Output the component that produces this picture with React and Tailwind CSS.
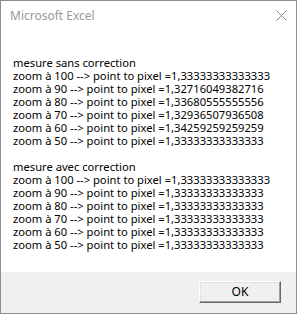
import React from "react";

const sans = { fontFamily: '"Noto Sans", "Open Sans", sans-serif' };

const without = [
  ["100", "1,33333333333333"],
  ["90", "1,32716049382716"],
  ["80", "1,33680555555556"],
  ["70", "1,32936507936508"],
  ["60", "1,34259259259259"],
  ["50", "1,33333333333333"],
];

const withFix = [
  ["100", "1,33333333333333"],
  ["90", "1,33333333333333"],
  ["80", "1,33333333333333"],
  ["70", "1,33333333333333"],
  ["60", "1,33333333333333"],
  ["50", "1,33333333333333"],
];

function Lines({ title, rows }) {
  return (
    <>
      <div>{title}</div>
      {rows.map(([z, v]) => (
        <div key={z + v}>
          zoom à {z} --&gt; point to pixel ={v}
        </div>
      ))}
    </>
  );
}

export default function App() {
  return (
    <div className="w-[298px] h-[315px] bg-white" style={sans}>
      <div className="w-[297px] h-[314px] border border-[#8e8e8e] bg-white flex flex-col">
        <div className="h-[29px] flex items-center justify-between pl-[9px] pr-[9px]">
          <span className="text-[12px] text-[#9a9a9a] mt-[1px]">Microsoft Excel</span>
          <svg width="11" height="11" viewBox="0 0 11 11">
            <path d="M0.5 0.5 L10.5 10.5 M10.5 0.5 L0.5 10.5" stroke="#8a8a8a" strokeWidth="1" />
          </svg>
        </div>
        <div className="flex-1 pt-[26px] pl-[12px] text-[11.2px] leading-[13px] text-black whitespace-nowrap">
          <Lines title="mesure sans correction" rows={without} />
          <div className="h-[13px]" />
          <Lines title="mesure avec correction" rows={withFix} />
        </div>
        <div className="h-[41px] bg-[#f0f0f0] flex justify-end items-start pt-[9px] pr-[15px]">
          <button className="w-[82px] h-[22px] bg-[#f0f0f0] border border-t-white border-l-white border-r-[#696969] border-b-[#696969] shadow-[inset_-1px_-1px_0_#a0a0a0,inset_1px_1px_0_#e3e3e3] text-[12px] text-black flex items-center justify-center">
            OK
          </button>
        </div>
      </div>
    </div>
  );
}
